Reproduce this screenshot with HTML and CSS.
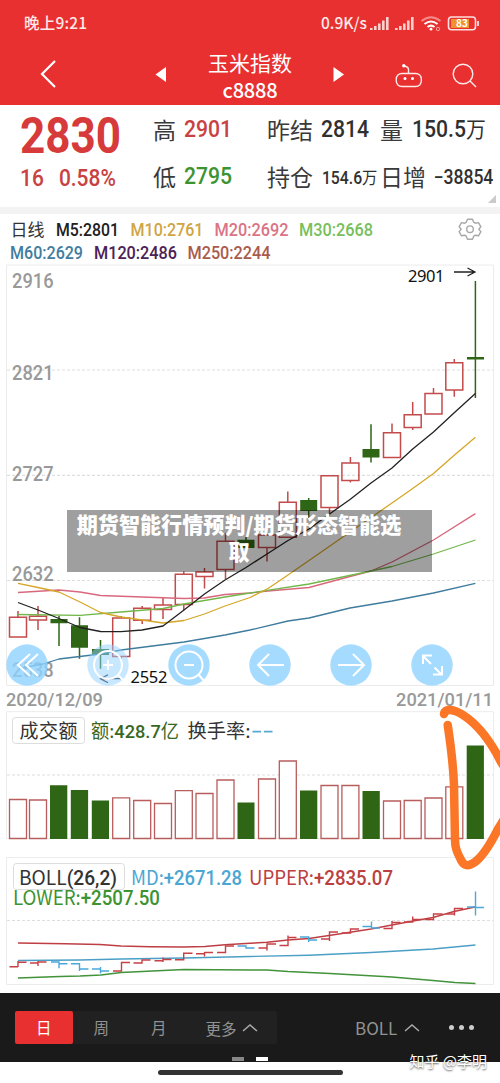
FILE: index.html
```html
<!DOCTYPE html>
<html lang="zh-CN">
<head>
<meta charset="utf-8">
<title>玉米指数</title>
<link rel="stylesheet" href="styles.css">
</head>
<body>
<div class="phone">
  <header class="top">
    <div class="status">
      <span class="clock">晚上9:21</span>
      <span class="speed">0.9K/s</span>
      <svg class="status-icons" width="112" height="20" viewBox="368 12 112 20">
        <g fill="#fbd0cd">
          <path d="M370 27h2.6v2h-2.6zM374 25h2.6v4h-2.6zM378 22.500h2.600v6.500h-2.600zM382 19.500h2.600v9.500h-2.600zM386 16h2.600v13h-2.600z"/>
          <path d="M395 27h2.600v2h-2.600zM399 25h2.600v4h-2.600zM403 22.500h2.600v6.500h-2.600zM407 19.500h2.600v9.500h-2.600zM411 16h2.600v13h-2.600z"/>
        </g>
        <path d="M421.500 20q9.500-7.500 19 0" fill="none" stroke="#f38b88" stroke-width="2"/>
        <path d="M424.500 23q6.500-5 13 0M427.500 26q3.500-2.700 7 0" fill="none" stroke="#fff" stroke-width="2"/>
        <circle cx="431" cy="28.200" r="1.400" fill="#fff"/>
        <circle cx="438" cy="28" r="1.700" fill="none" stroke="#f6a19e"/>
        <rect x="448.500" y="16" width="27" height="12.800" rx="3" fill="none" stroke="#fde0de" stroke-width="1.600"/>
        <path d="M478 20v5" stroke="#fde0de" stroke-width="1.800"/>
        <path d="M451 18h18v9h-18z" fill="#f2922c"/>
        <text x="462" y="26.200" text-anchor="middle" class="battery">83</text>
      </svg>
    </div>
    <div class="nav">
      <svg width="190" height="60" viewBox="0 45 190 60">
        <path d="M55 61L42 74l13 13" fill="none" stroke="#fff" stroke-width="2.200"/>
        <path d="M155.500 74.500l10.500-7.500v15z" fill="#fff"/>
      </svg>
      <div class="title"><span class="name">玉米指数</span><span class="code">c8888</span></div>
      <svg width="190" height="60" viewBox="310 45 190 60">
        <path d="M344 74.500L333.500 67v15z" fill="#fff"/>
        <g fill="none" stroke="#fde9e8" stroke-width="1.400">
          <rect x="396.300" y="73.500" width="25" height="13" rx="5.500"/>
          <path d="M408.500 73v-3.500q0-2.500-4-3.500"/>
          <circle cx="463" cy="74" r="9.800"/><path d="M470 81l6 6"/>
        </g>
        <g fill="#fff"><circle cx="403.800" cy="65.800" r="1.700"/><circle cx="405" cy="78.500" r="1.500"/><circle cx="412.500" cy="78.500" r="1.500"/></g>
      </svg>
    </div>
  </header>

  <section class="quote">
    <div class="last">
      <div class="price">2830</div>
      <div class="change"><span>16</span><span>0.58%</span></div>
    </div>
    <dl class="facts">
      <dt>高</dt><dd class="up">2901</dd><dt>昨结</dt><dd>2814</dd><dt>量</dt><dd>150.5<i>万</i></dd>
      <dt>低</dt><dd class="down">2795</dd><dt>持仓</dt><dd class="small">154.6<i>万</i></dd><dt class="wide">日增</dt><dd class="delta">−38854</dd>
    </dl>
    <span class="corner"></span>
  </section>

  <section class="legend">
    <svg width="500" height="50" viewBox="0 214 500 50">
      <text x="10.500" y="236" class="cn" font-size="17" textLength="34">日线</text>
      <g class="din" font-size="17.500">
        <text x="56" y="236" fill="#202020" textLength="63" lengthAdjust="spacingAndGlyphs">M5:2801</text>
        <text x="130.500" y="236" fill="#cfa545" textLength="73" lengthAdjust="spacingAndGlyphs">M10:2761</text>
        <text x="214.500" y="236" fill="#da7485" textLength="74" lengthAdjust="spacingAndGlyphs">M20:2692</text>
        <text x="299" y="236" fill="#78bf5c" textLength="74" lengthAdjust="spacingAndGlyphs">M30:2668</text>
        <text x="10" y="258.500" fill="#427d9f" textLength="73" lengthAdjust="spacingAndGlyphs">M60:2629</text>
        <text x="94" y="258.500" fill="#4c2255" textLength="83" lengthAdjust="spacingAndGlyphs">M120:2486</text>
        <text x="187.500" y="258.500" fill="#aa5c4c" textLength="83" lengthAdjust="spacingAndGlyphs">M250:2244</text>
      </g>
      <g fill="none" stroke="#a8a8a8" stroke-width="1.400" stroke-linejoin="round">
        <path d="M467.500 219.200h5l1.200 3 1.600 1 3.200-.6 2.400 4.200-2.100 2.400 2.100 2.400-2.400 4.200-3.200-.6-1.600 1-1.200 3h-5l-1.200-3-1.600-1-3.200.6-2.400-4.200 2.100-2.400-2.100-2.400 2.400-4.200 3.200.6 1.600-1z"/>
        <circle cx="470" cy="229.200" r="3.300"/>
      </g>
    </svg>
  </section>

  <section class="kline">
    <svg width="500" height="423" viewBox="0 264 500 423">
      <path d="M6.500 265H493.500V685.500H6.500z" class="frame"/>
      <path d="M7 370H493M7 475.400H493M7 580.500H493" class="grid"/>
      <g class="din axis" font-size="20">
        <text x="12" y="288" textLength="41.500" lengthAdjust="spacingAndGlyphs">2916</text>
        <text x="12" y="380" textLength="41.500" lengthAdjust="spacingAndGlyphs">2821</text>
        <text x="12" y="481" textLength="41.500" lengthAdjust="spacingAndGlyphs">2727</text>
        <text x="12" y="581" textLength="41.500" lengthAdjust="spacingAndGlyphs">2632</text>
        <text x="12" y="677" textLength="41.500" lengthAdjust="spacingAndGlyphs">2538</text>
      </g>
      <path class="candle-up" d="M9.500 617.300h17v19.800h-17zM18 617v-6M29.500 616.300h17v3.600h-17zM38 616v-10M38 620v10M112.700 618h17v38.500h-17zM121.200 618v-2M121.200 656v4M133.700 608.300h17v12h-17zM142.200 608v-2M142.200 620v4M154.500 605h17v4.500h-17zM163 605v-8M163 609v10M175.300 574.300h17v30.200h-17zM183.800 574v-2.500M183.800 604v6M196 572h17v4.400h-17zM204.500 572v-4M204.500 576v12.500M217 541.300h17v28.200h-17zM225.500 541v-8M225.500 569v10M258.500 535h17v12.500h-17zM267 547.500v14M279.300 502.300h17v35h-17zM287.800 502v-10.500M321 475.700h17v31.800h-17zM329.500 507.500v8M341.900 463h17v17.400h-17zM350.400 463v-6M350.400 480v2.500M383.500 432.700h17v24.700h-17zM392 432.500v-9M404.200 414.700h17v12.700h-17zM412.700 414.500v-12.500M412.700 427v3M425 393.400h17v20.600h-17zM433.500 393v-5M445.800 362.700h17v27.300h-17zM454.300 362v-3M454.300 390v6.700"/>
      <g class="green"><path d="M50.500 619h17v4.300h-17zM71 625.300h17v22.400h-17zM92 649h17v6h-17zM237.500 539.700h17v8.300h-17zM300.200 500h17v11h-17zM362.500 449h17v8.500h-17zM467 357h17v2.600h-17z"/>
      <path fill="none" stroke="#2f6616" stroke-width="1.500" d="M59 615.700V646M79.500 617.300v41.400M100.500 640v28.700M246 537v13M308.700 498v20M371 424.300v38.200M475.400 281v117"/></g>
      <g fill="none" stroke-width="1.300" stroke-linejoin="round">
        <path stroke="#3f7c9d" d="M22 668L43 664 59 659 100.500 654 121 650 184 642 225 635 250 630 288 621 309 618 350 608 392 601 433.500 593 475.400 583.300"/>
        <path stroke="#d9687e" d="M18 592.500L59 590 80 592 100.500 595.500 142 597 184 598.500 204 598 225 594.500 250 593 268 591 309 587.500 350 576.500 371 571 392 562 433.500 540 475.400 513.600"/>
        <path stroke="#73b74b" d="M18 614.500L80 615.300 121 612 163 608.500 184 604 225 597 250 593 309 584 371 571 392 566.500 433.500 554 475.400 540"/>
        <path stroke="#d5a627" d="M18 583.300L38 587.500 59 592 80 602 100.500 612.500 121 617 142 620 163 623 184 620.500 204.500 614 225 606 250 597.500 268 588.500 288 575 309 560.500 350 532 371 517.500 392 503 412.700 488.500 433.500 473.500 454.500 455 475.400 437.300"/>
        <path stroke="#222" d="M18 602.500L38 610 59 618.500 80 627.500 100.500 631.500 121 631.600 142 630 163 626 184 610 204.500 594 225 580 246 567.500 267 554 288 540.500 309 529 329.500 514 350 499.500 371 483 392 468 412.700 449 433.500 432 454.500 412.500 475.400 393.400"/>
      </g>
      <g class="callout"><text x="408" y="281.500" textLength="36.500">2901</text><text x="130.500" y="682.500" textLength="37">2552</text></g>
      <path d="M454 272h21M467.500 268l7.500 4-7.500 4M121 678.700h-20M108 674.700l-7.500 4 7.500 4" fill="none" stroke="#222" stroke-width="1.300"/>
    </svg>

    <div class="tools">
      <svg viewBox="0 0 42 42"><circle cx="21" cy="21" r="20.700"/><path d="M24 10L12 21l12 11M32 10L20 21l12 11"/></svg>
      <svg viewBox="0 0 42 42" class="dim"><circle cx="21" cy="21" r="20.700"/><path d="M21 16v10M16 21h10M31 31l6 6M35 21a14 14 0 1 0-28 0 14 14 0 1 0 28 0"/></svg>
      <svg viewBox="0 0 42 42"><circle cx="21" cy="21" r="20.700"/><path d="M16 21h10M31 31l5 6M34.500 21a13.500 13.500 0 1 0-27 0 13.500 13.500 0 1 0 27 0"/></svg>
      <svg viewBox="0 0 42 42"><circle cx="21" cy="21" r="20.700"/><path d="M35 21H9M20 10L9 21l11 11"/></svg>
      <svg viewBox="0 0 42 42"><circle cx="21" cy="21" r="20.700"/><path d="M8 21h26M23 10l11 11-11 11"/></svg>
      <svg viewBox="0 0 42 42"><circle cx="21" cy="21" r="20.700"/><path d="M20 20l-8-8M12 20v-8.500h9M23.500 23.500l7 7M31 22v8.500h-9"/></svg>
    </div>
    <div class="banner">期货智能行情预判/期货形态智能选<br>取</div>
  </section>

  <div class="dates"><span>2020/12/09</span><span>2021/01/11</span></div>

  <section class="volume">
    <svg width="500" height="130" viewBox="0 711 500 130">
      <path d="M6.500 711.700H493.500V838.500H6.500z" class="frame"/>
      <path d="M7 775H493" class="grid"/>
      <rect x="12.500" y="717.500" width="72" height="26" rx="3" class="chip"/>
      <text x="19.500" y="738" class="cn" font-size="19" textLength="58">成交额</text>
      <text x="91" y="738" class="cn deal" font-size="19" textLength="88" lengthAdjust="spacingAndGlyphs">额:<tspan class="din">428.7</tspan>亿</text>
      <text x="187.500" y="738" class="cn" font-size="19" textLength="63" lengthAdjust="spacingAndGlyphs">换手率:</text>
      <path d="M252.500 731.700h8.500M264 731.700h8.500" stroke="#56a9d2" stroke-width="1.700"/>
      <path class="bar-up" d="M9.500 838.500v-39h17v39zM29.500 838.500v-38.500h17v38.500zM112.700 838.500v-40.700h17v40.700zM133.700 838.500v-38h17v38zM154.500 838.500v-35h17v35zM175.300 838.500v-47.800h17v47.800zM196 838.500v-45h17v45zM217 838.500v-58.500h17v58.500zM258.500 838.500v-59.500h17v59.500zM279.300 838.500v-77.500h17v77.500zM321 838.500v-53h17v53zM341.900 838.500v-53h17v53zM383.500 838.500v-37.500h17v37.500zM404.200 838.500v-38h17v38zM425 838.500v-40.500h17v40.500zM445.800 838.500v-51.700h17v51.700z"/>
      <path class="green" d="M50 839v-53.700h17.300V839zM70.800 839v-49h17.300v49zM91.800 839v-38.500h17.200V839zM237.500 839v-36.500h17V839zM300 839v-48.500h17.300V839zM362.500 839v-48h17.300v48zM466.700 839v-93.500h17.200V839z"/>
    </svg>
  </section>

  <section class="boll">
    <svg width="500" height="136" viewBox="0 857 500 136">
      <path d="M6.500 857.500H493.500V984.500H6.500z" class="frame"/>
      <path d="M7 920.500H493" class="grid"/>
      <rect x="13.500" y="863.500" width="111" height="26" rx="3" class="chip"/>
      <g class="cn" font-size="19.500">
        <text x="19" y="884.500" textLength="98" lengthAdjust="spacingAndGlyphs">BOLL<tspan class="din">(26,2)</tspan></text>
        <text x="131" y="884.500" class="md" textLength="111" lengthAdjust="spacingAndGlyphs">MD:<tspan class="din">+2671.28</tspan></text>
        <text x="249" y="884.500" class="upper" textLength="144" lengthAdjust="spacingAndGlyphs">UPPER:<tspan class="din">+2835.07</tspan></text>
        <text x="13" y="905" class="lower" textLength="147" lengthAdjust="spacingAndGlyphs">LOWER:<tspan class="din">+2507.50</tspan></text>
      </g>
      <g fill="none" stroke-width="1.400">
        <path stroke="#bd3f44" d="M18 943L65 943.700 100 944.500 121 946 150 946.800 184 947 205 946.500 225 944.800 250 943.300 267 942.300 288 940 309 938.500 329 935.500 371 929 413 921 433 917.500 454 911.500 475 907"/>
        <path stroke="#4b9fc5" d="M18 960.500L80 960 121 959 184 958 250 956.500 309 955.200 371 952.500 433 949 475.500 945"/>
        <path stroke="#42933a" d="M18 978L60 976.500 80 976 101 975 121 972.500 142 971.500 184 969.500 250 970 267 970 288 971.500 330 973.500 392 977 433 980.500 455 982.500 475.500 983.500"/>
        <path stroke="#c64146" d="M9.500 966.700H18M18 967V961M18 962.300H26.500M30 963H38M38 961v5M38 962H46.500M113 971H121.500V962.500H130M133.500 963H142V960H150.500M154.500 960.700H163M163 957.500V962M163 959.500H171.500M175 959.700H183.700V953.300H192.500M196 953.700H204.500M204.500 952v4.500M204.500 952.500H213M217 952.500H225.500V946H234M258.500 948H267M267 950.500V944H276M279.500 945.500H288V935.500M288 937.500H296.500M321 939H329.500M329.500 941V932H338M341.700 933H350.500V929H359M383.500 928.500H392V921M392 922.500H400.500M404 922H412.700V916.500M412.700 919.500H421.500M425 919.500H433.500V914H442.500M446 914H454.500M454.500 915.500V908.500H463"/>
        <path stroke="#4aa8dc" d="M51 962H59V968.300M59 963.700H67.500M71 963.700H79.500V971M79.500 969H88.500M92 969H100.500M100.500 967v6.500M100.500 971H109M237.500 946H246V948H254.500M300 937H308.700V942M308.700 940H317M362.500 926.500H371.500M371.500 921.500V928H380M467 907H475.500M475.500 891.500V915.500M475.500 907.500H484"/>
      </g>
    </svg>
  </section>

  <footer class="bottom">
    <div class="periods">
      <span class="active">日</span><span>周</span><span>月</span>
      <span class="more">更多<svg width="16" height="10" viewBox="0 0 16 10"><path d="M1 8l7-6 7 6"/></svg></span>
    </div>
    <div class="indicator">BOLL<svg width="16" height="10" viewBox="0 0 16 10"><path d="M1 8l7-6 7 6"/></svg></div>
    <div class="dots"><i></i><i></i><i></i></div>
    <div class="pager"><i></i><i class="on"></i></div>
  </footer>
  <div class="home"><span></span></div>
  <div class="watermark">知乎 @李明</div>

  <svg class="scribble" width="70" height="175" viewBox="430 700 70 175">
    <path d="M444 714C445 708 454 709 463 715 477 724 490 740 501 762 522 792 509 812 498 829 490 845 483 856 475 862 468 867 464 866 461 860 457 852 455 848 455 840L454 785Q453 760 447.700 725"/>
  </svg>
</div>
</body>
</html>
```
FILE: styles.css
```css
* { box-sizing: border-box; }
body { margin: 0; background: #fff; font-family: "Noto Sans CJK SC", sans-serif; color: #333; }
svg { display: block; flex: none; }
i { font-style: normal; }
.phone { position: relative; width: 500px; height: 1083px; overflow: hidden; display: flex; flex-direction: column; }

.top { height: 105px; flex: none; background: #e83030; color: #fff; }
.status { height: 45px; display: flex; align-items: center; padding: 0 20px 2px 24px; font-size: 15.500px; font-weight: 500; color: #fde9e8; }
.clock { letter-spacing: .2px; line-height: 20px; }
.speed { margin-left: auto; margin-right: 1px; line-height: 20px; font-size: 15.500px; }
.status-icons { position: relative; top: 1px; }
.battery { font: 700 10px "Noto Sans CJK SC", sans-serif; fill: #fff; }
.nav { height: 60px; display: flex; }
.title { flex: 1; display: flex; flex-direction: column; align-items: center; padding-top: 3px; }
.name { font-size: 21px; line-height: 28px; }
.code { font-size: 20px; line-height: 28px; font-weight: 500; letter-spacing: -.2px; }

.quote { position: relative; height: 109px; flex: none; display: flex; border-bottom: 7px solid #f3f3f3; padding: 0 0 0 20px; }
.last { width: 133px; color: #d63a3a; font-family: Roboto, sans-serif; }
.price { font-size: 50px; line-height: 50px; font-weight: 700; padding-top: 6px; height: 58px; transform: scaleX(.88); transform-origin: left; }
.change { display: flex; gap: 17px; font-size: 23.500px; line-height: 30px; font-weight: 500; color: #c84242; transform: scaleX(.89); transform-origin: left; }
.facts { margin: 0; width: 347px; display: grid; grid-template-columns: 31px 83px 54px 59px 32px 1fr; grid-template-rows: 48px 46px; align-items: center; }
.facts dt { font-size: 23px; line-height: 34px; color: #3a3a3a; white-space: nowrap; }
.facts dd { margin: 0; font: 500 23.500px/34px Roboto, sans-serif; white-space: nowrap; color: #303030; transform: scaleX(.9); transform-origin: left; }
.facts dd i { font: 400 22px/30px "Noto Sans CJK SC", sans-serif; }
.facts .up { color: #c84242; }
.facts .down { color: #3c9330; }
.facts .small { font-size: 17.500px; padding: 4px 0 0 1px; }
.facts .small i { font-size: 17px; }
.facts .delta { font-size: 19.500px; padding: 3px 0 0 24px; }
.corner { position: absolute; right: 4px; bottom: 4px; border-left: 8px solid transparent; border-bottom: 8px solid #cacaca; }

.legend { height: 50px; flex: none; }
.cn { font-family: "Noto Sans CJK SC", sans-serif; fill: #333; }
.deal { fill: #38681f; }
.md { fill: #4aa6d2; }
.upper { fill: #bb4040; }
.lower { fill: #3c9330; }
.din { font-family: Roboto, sans-serif; font-weight: 500; }
.axis { fill: #999; }
.frame { fill: none; stroke: #ececec; stroke-width: 1; }
.grid { stroke: #dedede; stroke-width: 1.200; stroke-dasharray: 3 2; }
.candle-up { fill: none; stroke: #c34b4b; stroke-width: 1.500; }
.bar-up { fill: #fff; stroke: #b85c5c; stroke-width: 1.300; }
.green { fill: #2f6616; }
.chip { fill: #fff; stroke: #ddd; }
.callout { font: 400 16.500px "Noto Sans", sans-serif; fill: #111; }

.kline { position: relative; height: 423px; flex: none; }
.tools { position: absolute; left: 6px; top: 380px; display: flex; gap: 39px; }
.tools svg { width: 42px; height: 42px; }
.tools circle { fill: #8fd2ff; fill-opacity: .8; }
.tools .dim circle { fill-opacity: .5; }
.tools path { fill: none; stroke: #fff; stroke-width: 2; }
.banner { position: absolute; left: 67px; top: 246px; width: 365px; height: 62px; padding: 1px 27px 0 6px; background: rgba(0,0,0,.375); color: #fff; text-align: center; font-size: 21.100px; line-height: 27px; font-weight: 900; white-space: nowrap; }

.dates { height: 24px; flex: none; display: flex; justify-content: space-between; padding: 1px 7px 0 6px; font: 500 18.200px/24px Roboto, sans-serif; color: #999; }
.volume { height: 146px; flex: none; }
.boll { height: 136px; flex: none; }

.bottom { position: relative; height: 69px; flex: none; background: #1a1a1a; color: #929292; font-size: 15.500px; line-height: 32px; display: flex; padding: 18px 26px 0 15px; }
.periods { width: 262px; height: 33px; display: flex; background: #212121; border-radius: 2px; }
.periods span { width: 57.500px; text-align: center; }
.periods .active { background: #e93030; color: #fff; border-radius: 2px; }
.periods .more { width: auto; display: flex; align-items: center; gap: 5px; padding-left: 18px; }
.bottom path { fill: none; stroke: #aaa; stroke-width: 1.500; }
.indicator { margin-left: 78px; display: flex; align-items: center; gap: 7px; height: 33px; font-size: 17px; }
.dots { margin-left: auto; height: 33px; display: flex; align-items: center; gap: 4.500px; }
.dots i { width: 5.500px; height: 5.500px; border-radius: 50%; background: #ccc; }
.pager { position: absolute; left: 232px; bottom: 1px; display: flex; gap: 12px; }
.pager i { width: 12px; height: 4px; background: #888; }
.pager .on { background: #fff; }
.home { height: 21px; display: flex; justify-content: center; padding-top: 8px; }
.home span { width: 185px; height: 5px; border-radius: 3px; background: #333; }
.watermark { position: absolute; right: 13px; top: 1050px; font-size: 15px; line-height: 22px; color: #fff; text-shadow: 0 1px 2px rgba(0,0,0,.7); }
.scribble { position: absolute; left: 430px; top: 700px; }
.scribble path { fill: none; stroke: #fb7626; stroke-width: 8.500; stroke-linecap: round; stroke-linejoin: round; }
```
